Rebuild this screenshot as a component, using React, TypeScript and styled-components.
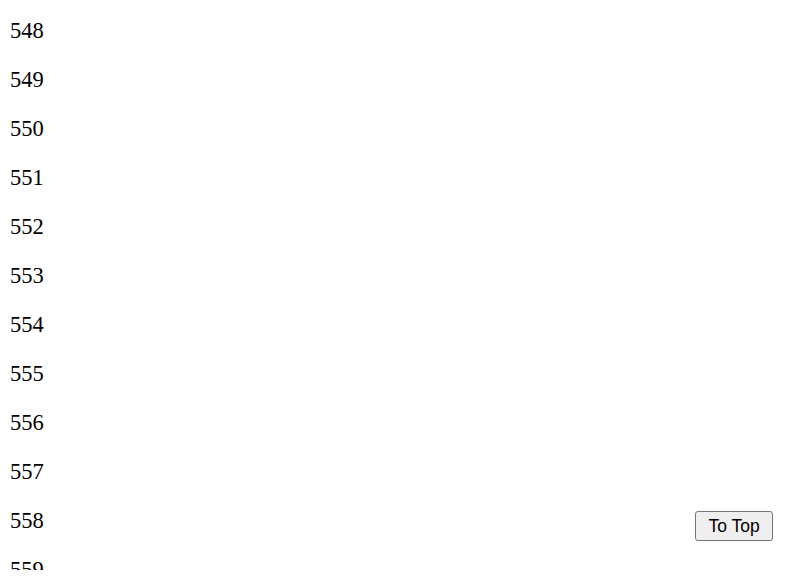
import React from "react";
import styled, { createGlobalStyle } from "styled-components";

const GlobalStyle = createGlobalStyle`
  html, body {
    margin: 0;
    background: #fff;
  }
  body {
    font-family: "Liberation Serif", "Times New Roman", serif;
    color: #000;
    overflow: hidden;
  }
`;

// visible scroll area; the last row is clipped at its bottom edge
const Viewport = styled.div`
  height: 570px;
  overflow: hidden;
`;

const List = styled.div`
  display: flex;
  flex-direction: column;
  gap: 22px;
  padding: 17px 10px;
`;

const Row = styled.p`
  margin: 0;
  font-size: 22.5px;
  line-height: 27px;
`;

const TopButton = styled.button`
  position: fixed;
  right: 27px;
  bottom: 36px;
  width: 78px;
  height: 30px;
  padding: 0 10px;
  font-family: "Liberation Sans", Arial, sans-serif;
  font-size: 17.5px;
  color: #000;
  background: #efefef;
  border: 1px solid #767676;
  border-radius: 3px;
  cursor: pointer;
`;

const FIRST = 548;
const items = Array.from({ length: 12 }, (_, i) => FIRST + i);

export default function App() {
  return (
    <>
      <GlobalStyle />
      <Viewport>
        <List>
          {items.map((n) => (
            <Row key={n}>{n}</Row>
          ))}
        </List>
      </Viewport>
      <TopButton onClick={() => window.scrollTo({ top: 0, behavior: "smooth" })}>
        To Top
      </TopButton>
    </>
  );
}
